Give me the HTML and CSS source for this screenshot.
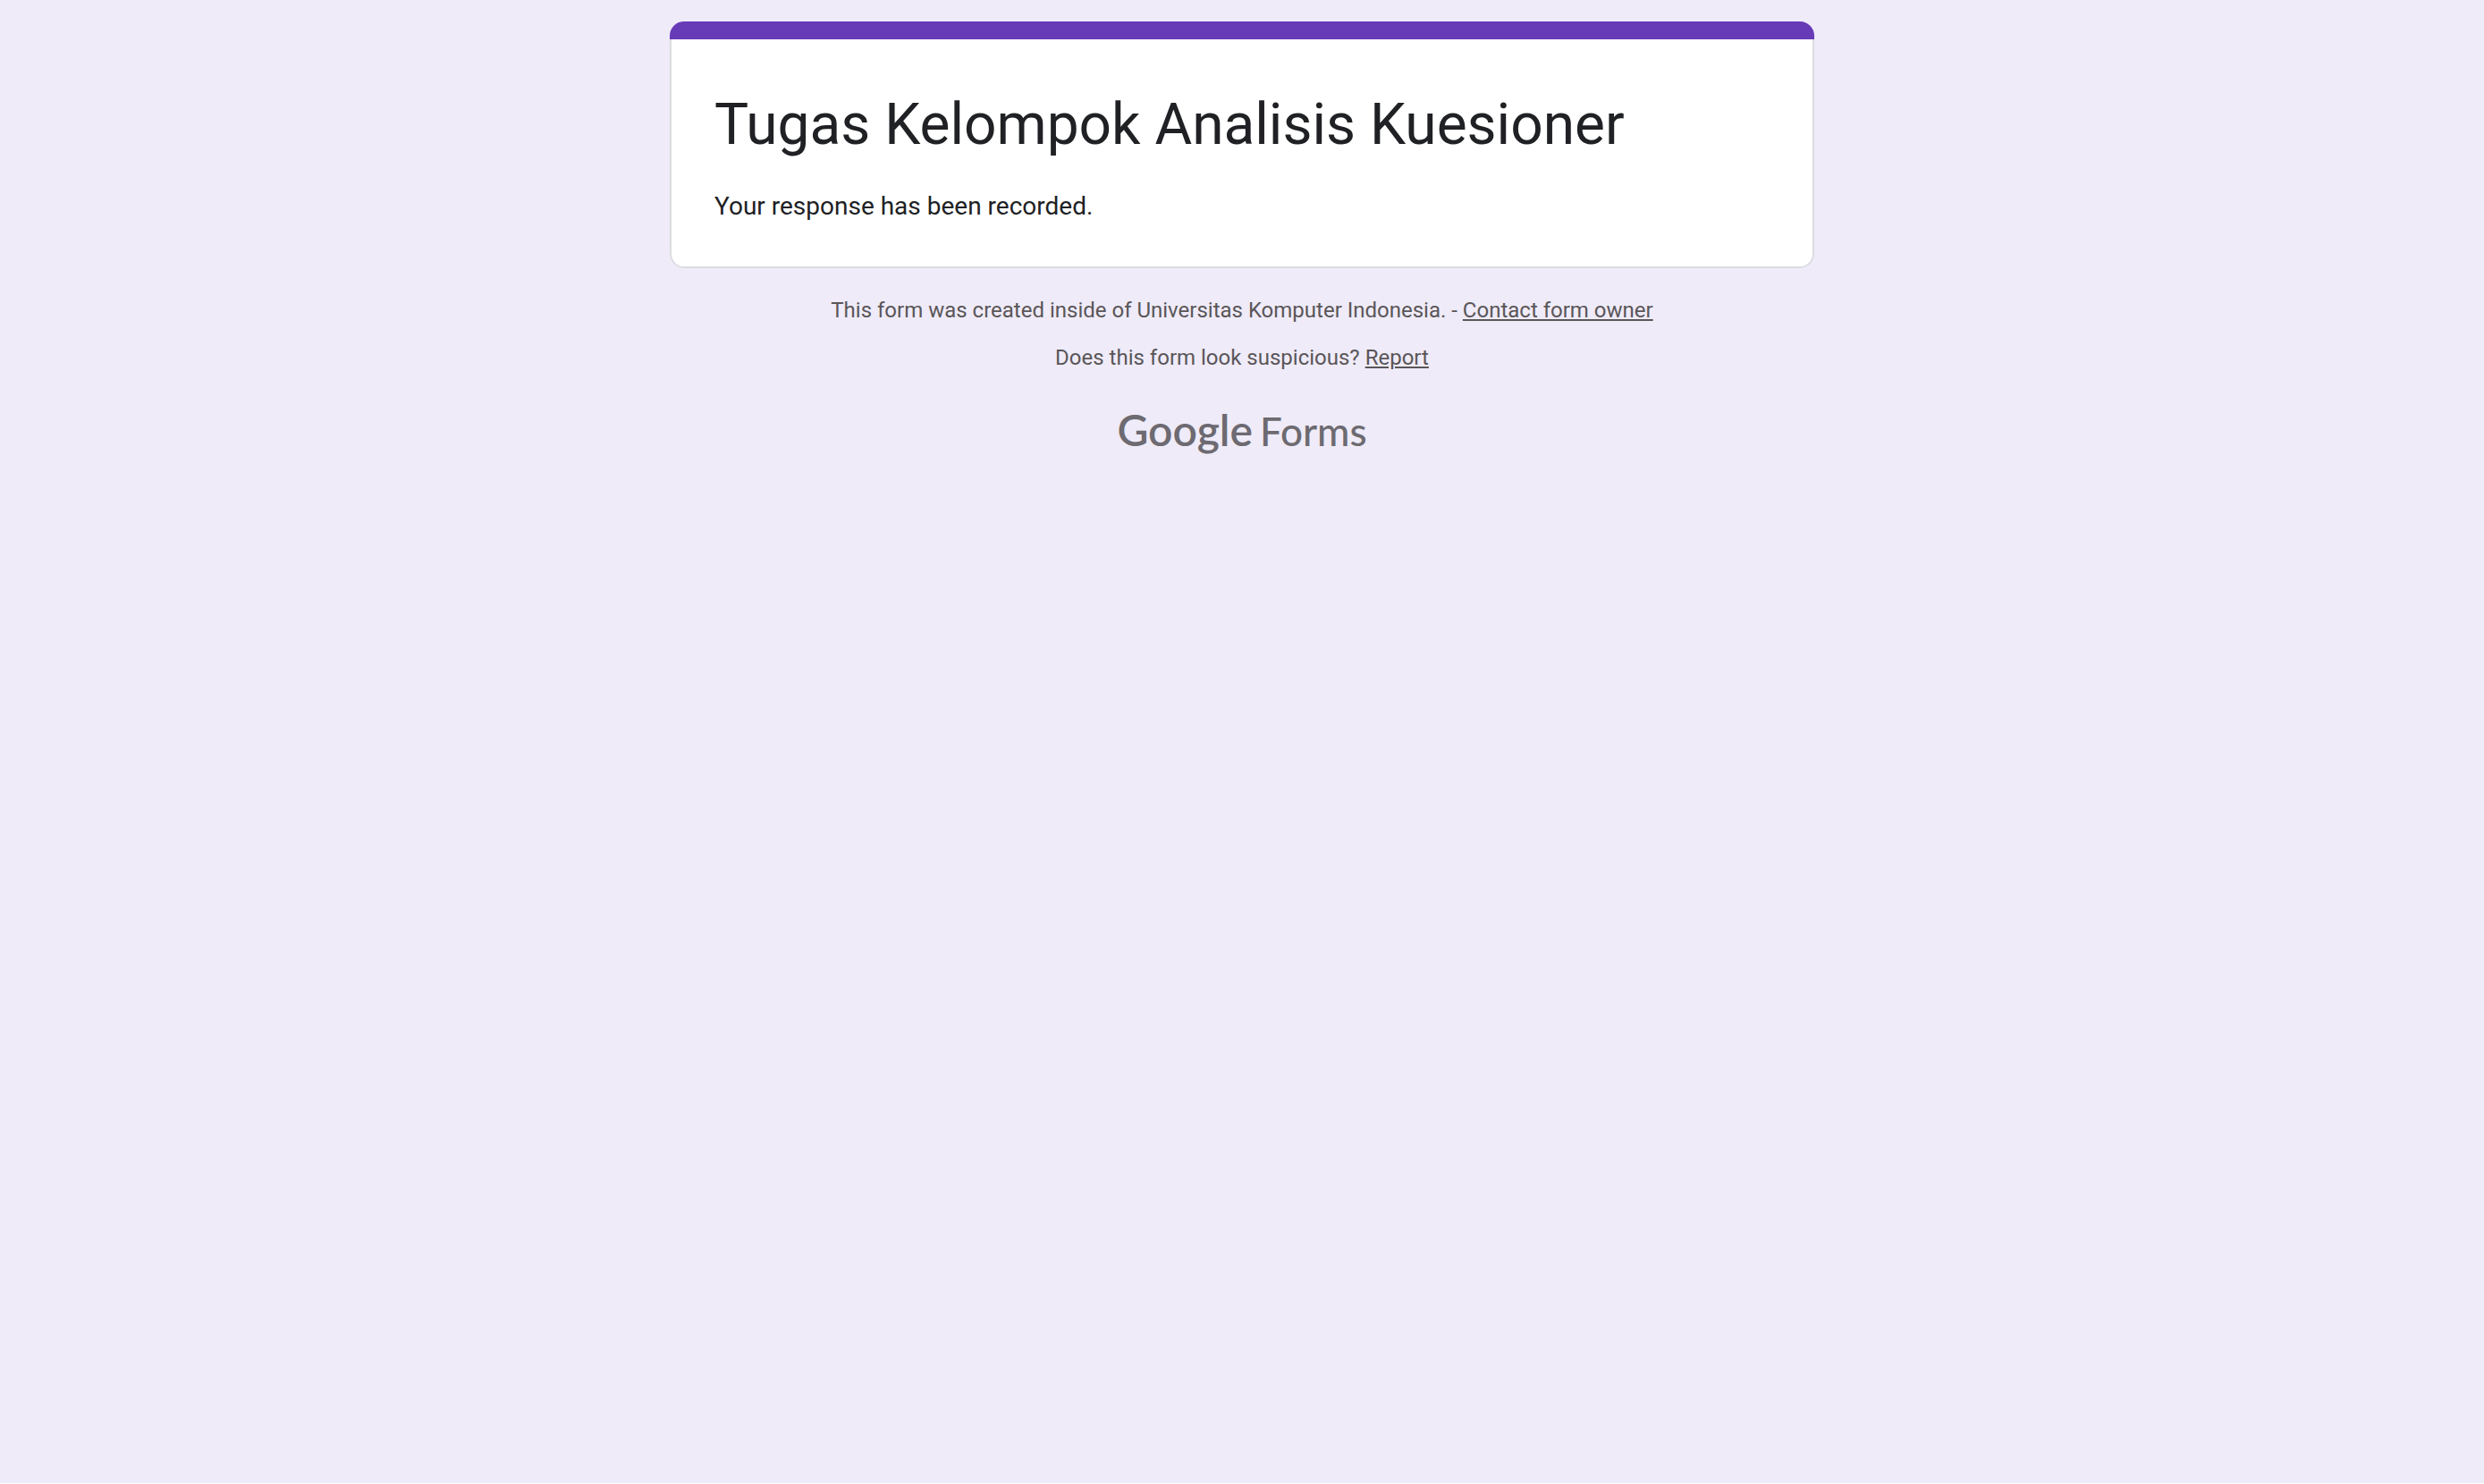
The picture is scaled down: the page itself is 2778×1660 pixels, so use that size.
FILE: index.html
```html
<!DOCTYPE html>
<html lang="en">
<head>
<meta charset="utf-8">
<meta name="viewport" content="width=device-width, initial-scale=1">
<title>Tugas Kelompok Analisis Kuesioner</title>
<link rel="stylesheet" href="styles.css">
</head>
<body>
<div class="page">
  <main class="card">
    <div class="card-accent"></div>
    <div class="card-body">
      <h1 class="card-title">Tugas Kelompok Analisis Kuesioner</h1>
      <p class="card-message">Your response has been recorded.</p>
    </div>
  </main>
  <footer class="footer">
    <p class="notice">This form was created inside of Universitas Komputer Indonesia. - <a class="notice-link" href="#contact">Contact form owner</a></p>
    <p class="notice">Does this form look suspicious? <a class="notice-link" href="#report">Report</a></p>
    <a class="brand" href="#forms"><span class="brand-name">Google</span><span class="brand-product">Forms</span></a>
  </footer>
</div>
</body>
</html>
```
FILE: styles.css
```css
* {
  box-sizing: border-box;
}

html {
  background: #fff;
}

body {
  margin: 0;
  font-family: Roboto, "Liberation Sans", sans-serif;
  color: #202124;
  background: #efebf8;
  min-height: calc(100vh - 1px);
}

.page {
  max-width: 1280px;
  margin: 0 auto;
  padding-top: 24px;
}

.card {
  border-radius: 16px;
  overflow: hidden;
}

.card-accent {
  height: 20px;
  background: #673ab7;
}

.card-body {
  background: #fff;
  border: 2px solid #dadce0;
  border-top: 0;
  border-radius: 0 0 16px 16px;
  padding: 56px 48px 47px;
}

.card-title {
  margin: 0;
  font-size: 64px;
  font-weight: 400;
  line-height: 80px;
}

.card-message {
  margin: 31px 0 0;
  font-size: 28px;
  line-height: 40px;
}

.footer {
  display: flex;
  flex-direction: column;
  align-items: center;
  padding-top: 31px;
}

.notice {
  margin: 0 0 21px;
  font-size: 24px;
  line-height: 32px;
  text-align: center;
  color: #5a5659;
}

.notice-link {
  color: inherit;
}

.brand {
  display: flex;
  align-items: baseline;
  gap: 8px;
  margin-top: 16px;
  font-family: Lato, sans-serif;
  line-height: 56px;
  color: #6d6a71;
  text-decoration: none;
}

.brand-name {
  font-size: 48px;
  font-weight: 600;
}

.brand-product {
  font-size: 44px;
  font-weight: 500;
}
```
